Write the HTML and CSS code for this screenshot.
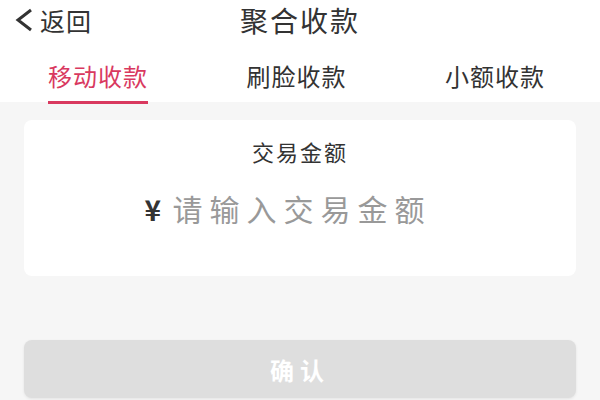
FILE: index.html
```html
<!DOCTYPE html>
<html lang="zh-CN">
<head>
    <meta charset="UTF-8">
    <meta name="viewport" content="width=device-width, initial-scale=1.0">
    <title>聚合收款</title>
    <link rel="stylesheet" href="styles.css">
</head>
<body>
    <div class="header">
        <div class="topbar">
            <a class="back" href="#">
                <svg width="20" height="24" viewBox="0 0 20 24"><path d="M17 2 L4 12 L17 22" fill="none" stroke="#333" stroke-width="3"/></svg>
                <span>返回</span>
            </a>
            <div class="title">聚合收款</div>
            <div></div>
        </div>
        <div class="tabs">
            <div class="tab active">移动收款</div>
            <div class="tab">刷脸收款</div>
            <div class="tab">小额收款</div>
        </div>
    </div>

    <div class="card">
        <div class="card-label">交易金额</div>
        <div class="amount">
            <span class="yen">¥</span>
            <span class="placeholder">请输入交易金额</span>
        </div>
    </div>

    <button class="confirm-btn">确认</button>
</body>
</html>
```

FILE: styles.css
```css
body {
    margin: 0;
    padding: 0;
    background: #f6f6f6;
    font-family: "Noto Sans CJK SC", "Noto Sans", sans-serif;
    color: #333;
    width: 600px;
    height: 400px;
    overflow: hidden;
}
.header {
    background: #fff;
    height: 102px;
}
.topbar {
    display: grid;
    grid-template-columns: 1fr auto 1fr;
    align-items: center;
    height: 40px;
}
.back {
    display: flex;
    align-items: center;
    gap: 6px;
    padding-left: 14px;
    color: #333;
    text-decoration: none;
    font-size: 25px;
    letter-spacing: 1px;
}
.title {
    font-size: 28px;
    letter-spacing: 2px;
}
.tabs {
    display: flex;
    justify-content: space-between;
    padding: 11px 55px 0 48px;
}
.tab {
    font-size: 24px;
    line-height: 30px;
    padding: 10px 0 10px;
    border-bottom: 3px solid transparent;
    letter-spacing: 1px;
}
.tab.active {
    color: #d9395f;
    border-bottom-color: #d9395f;
}
.card {
    margin: 18px 24px 0;
    height: 156px;
    background: #fff;
    border-radius: 8px;
    text-align: center;
    box-sizing: border-box;
    padding-top: 16px;
}
.card-label {
    font-size: 22px;
    line-height: 30px;
    letter-spacing: 2px;
}
.amount {
    margin-top: 22px;
    line-height: 40px;
    padding-right: 24px;
}
.yen {
    font-size: 28px;
    font-weight: bold;
    color: #333;
    margin-right: 8px;
}
.placeholder {
    font-size: 30px;
    color: #999;
    letter-spacing: 7px;
}
.confirm-btn {
    display: block;
    margin: 64px 24px 0;
    width: 552px;
    height: 58px;
    border: none;
    border-radius: 8px;
    background: #dedede;
    box-shadow: 0 1px 3px rgba(0, 0, 0, 0.08);
    color: #fff;
    font-family: "Noto Sans CJK SC", sans-serif;
    font-size: 24px;
    font-weight: bold;
    letter-spacing: 6px;
}
```
